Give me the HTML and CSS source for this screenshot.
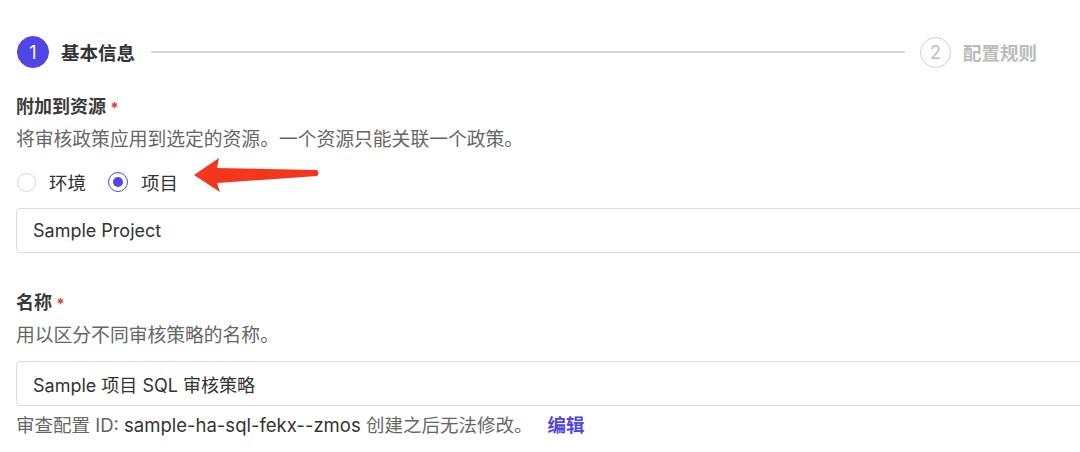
FILE: index.html
```html
<!DOCTYPE html>
<html lang="zh-CN">
<head>
	<meta charset="UTF-8">
	<title>创建审核策略</title>
	<link rel="stylesheet" href="styles.css">
</head>
<body>
	<div class="page">
		<div class="steps">
			<span class="step-num cur">1</span>
			<span class="step-title cur">基本信息</span>
			<span class="step-line"></span>
			<span class="step-num">2</span>
			<span class="step-title">配置规则</span>
		</div>

		<div class="field first">
			<div class="label">附加到资源 <span class="req">*</span></div>
			<div class="desc">将审核政策应用到选定的资源。一个资源只能关联一个政策。</div>
			<div class="radios">
				<label class="radio"><span class="dot"></span>环境</label>
				<label class="radio on"><span class="dot"></span>项目</label>
				<svg class="arrow" width="135" height="44" viewBox="0 0 135 44">
					<path d="M4 22 L29 5 L27 15 L127 17 Q130 20 127 23 L27 30 L30 39 Z" fill="#f3361c"/>
				</svg>
			</div>
			<div class="input">Sample Project</div>
		</div>

		<div class="field second">
			<div class="label">名称 <span class="req">*</span></div>
			<div class="desc desc2">用以区分不同审核策略的名称。</div>
			<div class="input input2">Sample 项目 SQL 审核策略</div>
			<div class="tip">审查配置 ID: <b>sample-ha-sql-fekx--zmos</b> 创建之后无法修改。 <a href="#">编辑</a></div>
		</div>
	</div>
</body>
</html>
```

FILE: styles.css
```css
*{margin:0;padding:0;box-sizing:border-box;}
body{background:#fff;font-family:Inter,"Noto Sans CJK SC",sans-serif;color:#333;overflow:hidden;}
.page{width:1120px;padding-left:16px;}

.steps{display:flex;align-items:center;height:32px;margin-top:36px;width:1021px;padding-left:1px;}
.step-num{width:31px;height:31px;border-radius:50%;border:1.5px solid #cfcfcf;color:#bdbdbd;font-size:18px;display:flex;align-items:center;justify-content:center;flex:none;}
.step-num.cur{width:32px;height:32px;background:#4f46e5;border-color:#4f46e5;color:#fff;}
.step-title{font-size:18.5px;font-weight:bold;color:#bbb;margin-left:12px;}
.step-title.cur{color:#333;}
.step-line{flex:1;height:2px;background:#d6d6d6;margin:0 15px 0 16px;}

.label{font-size:18px;font-weight:bold;color:#3a3a3a;line-height:24px;}
.req{color:#e53935;font-size:15px;}
.desc{font-size:18.8px;color:#666;line-height:24px;margin-top:8px;}
.first{margin-top:27px;}

.radios{display:flex;align-items:center;height:24px;margin-top:18px;position:relative;}
.radio{display:flex;align-items:center;font-size:18.5px;color:#333;margin-right:21px;}
.dot{width:19px;height:19px;border-radius:50%;border:1px solid #d8d8d8;margin:0 13px 0 1px;position:relative;}
.radio.on .dot{width:20px;height:20px;border:1.5px solid #4f46e5;}
.radio.on .dot:after{content:"";position:absolute;left:3.5px;top:3.5px;width:10px;height:10px;border-radius:50%;background:#4f46e5;}
.arrow{position:absolute;left:174px;top:-17px;}

.input{height:45px;border:1px solid #dcdcdc;border-radius:4px;font-size:18px;color:#333;display:flex;align-items:center;padding-left:16px;margin-top:14px;}
.second{margin-top:38px;}
.desc2{margin-top:8px;}
.input2{margin-top:13px;}
.tip{font-size:18.5px;color:#666;line-height:24px;margin-top:7px;}
.tip b{color:#333;font-weight:normal;}
.tip a{color:#4f46e5;font-weight:bold;text-decoration:none;margin-left:10px;}
```
